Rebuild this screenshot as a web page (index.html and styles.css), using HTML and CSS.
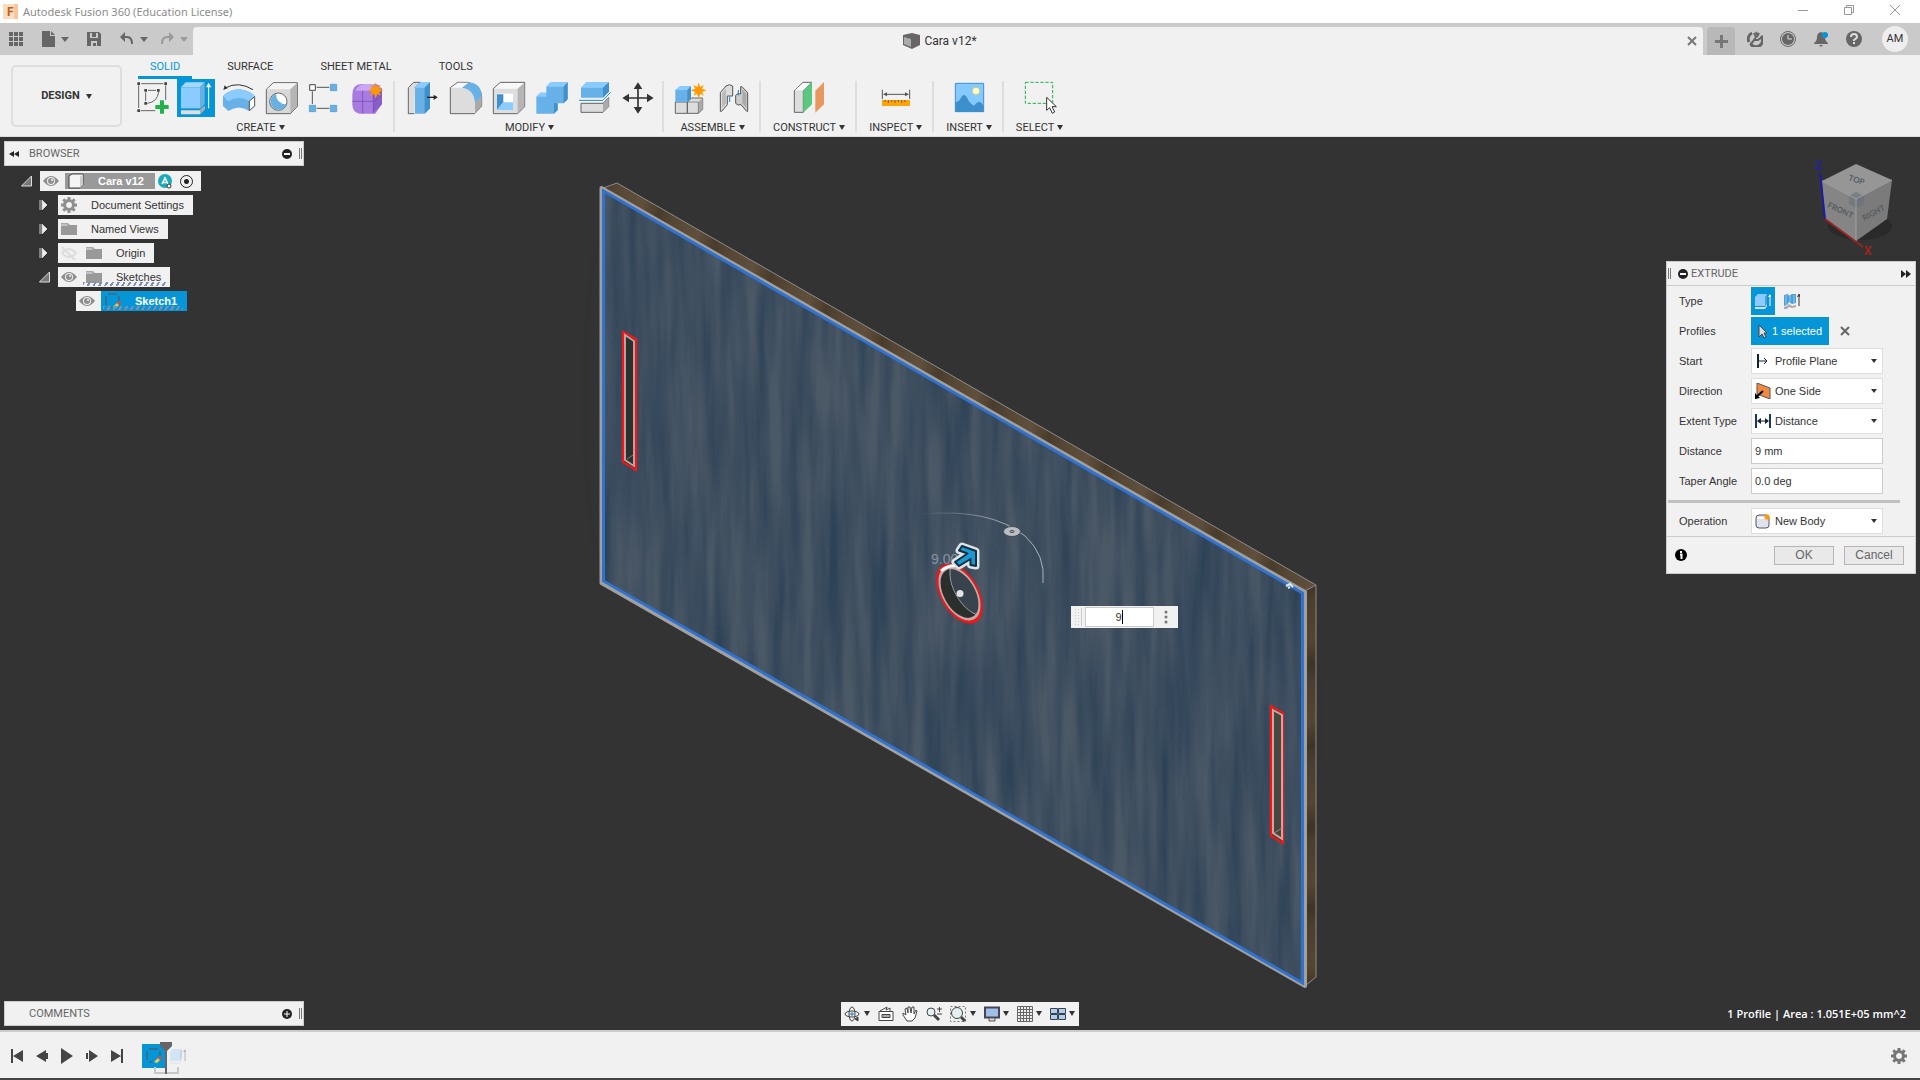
FILE: index.html
```html
<!DOCTYPE html>
<html lang="en">
<head>
    <meta charset="UTF-8">
    <meta name="viewport" content="width=device-width, initial-scale=1.0">
    <title>Autodesk Fusion 360 (Education License)</title>
    <link rel="stylesheet" href="styles.css">
</head>
<body>
    <!-- shared icons -->
    <svg class="defs" aria-hidden="true">
        <symbol id="eye" viewBox="0 0 16 16"><path d="M0 8Q8-2 16 8Q8 18 0 8Z" fill="#8f8f8f"/><circle cx="8" cy="8" r="4" fill="#f1f1f1"/><circle cx="8" cy="8" r="3" fill="#8f8f8f"/><circle cx="9" cy="7" r="1" fill="#f1f1f1"/></symbol>
        <symbol id="folder" viewBox="0 0 16 16"><path d="M0 2h7l2 2h7v2H0Z" fill="#a8a8a8"/><path d="M0 5h7l2-1h7v10H0Z" fill="#999"/><path d="M0 4h6" stroke="#ddd"/></symbol>
        <symbol id="gear" viewBox="0 0 16 16"><circle cx="8" cy="8" r="4.500" fill="none" stroke="currentColor" stroke-width="3"/><path d="M8 0v3M8 13v3M0 8h3M13 8h3M2.300 2.300l2.200 2.200M11.500 11.500l2.200 2.200M13.700 2.300l-2.200 2.200M4.500 11.500l-2.200 2.200" stroke="currentColor" stroke-width="3"/></symbol>
        <symbol id="star" viewBox="-24 -24 48 48"><path d="M0-24L4-10L15-16L10-5L24 0L10 5L16 16L5 10L0 24L-5 10L-16 16L-10 5L-24 0L-10-5L-16-16L-4-10Z" fill="#f90"/></symbol>
        <symbol id="sketch" viewBox="0 0 16 16"><path d="M3 1h9M1 3v9M3 14h4M14 3v5" stroke="#555" fill="none"/><path d="M8 14l4-4 2 2-3 3z" fill="#f7c948"/><path d="M12 10l2-2 2 2-2 2z" fill="#e8452c"/></symbol>
        <symbol id="extrude" viewBox="0 0 16 16"><path d="M0 4l3-3h9v9l-2 3H0Z" fill="#8accff"/><path d="M10 4l2-3v9l-2 3Z" fill="#4f9fd6"/><path d="M0 14h10l2-3v2l-2 3H0Z" fill="#ddd"/><path d="M15 2v11" stroke="currentColor"/><path d="M13 4l2-3 1 3z" fill="currentColor"/></symbol>
    </svg>

    <header class="titlebar">
        <svg class="app-icon" width="15" height="15" viewBox="0 0 15 15"><rect width="15" height="15" fill="#fbdcbf"/><rect x="11" width="4" height="15" fill="#f6c79c"/><text x="4" y="12" class="app-letter">F</text></svg>
        <span class="app-title">Autodesk Fusion 360 (Education License)</span>
        <div class="window-buttons">
            <button aria-label="Minimize"><svg width="12" height="12"><path d="M1 6.500h10" stroke="#999"/></svg></button>
            <button aria-label="Restore"><svg width="12" height="12" fill="none" stroke="#999"><path d="M1.500 3.500h7v7h-7zM3.500 3.500v-2h7v7h-2"/></svg></button>
            <button aria-label="Close"><svg width="12" height="12" stroke="#999"><path d="M1 1l10 10M11 1L1 11"/></svg></button>
        </div>
    </header>

    <div class="tabbar">
        <div class="quick">
            <button class="q-grid" aria-label="Data panel"><svg width="14" height="14" fill="#666"><path d="M0 0h4v4H0zM5 0h4v4H5zM10 0h4v4h-4zM0 5h4v4H0zM5 5h4v4H5zM10 5h4v4h-4zM0 10h4v4H0zM5 10h4v4H5zM10 10h4v4h-4z"/></svg></button>
            <button class="q-file" aria-label="File"><svg width="13" height="16" fill="#666"><path d="M0 0h8v5h5v11H0zM9 0l4 4H9z"/></svg><i class="caret"></i></button>
            <button class="q-save" aria-label="Save"><svg width="14" height="14"><path d="M0 0h12l2 2v12H0z" fill="#666"/><path d="M3 1h8v5H3zM4 9h6v5H4z" fill="#cacaca"/><path d="M5 0h4v5H5zM6 11h3v3H6z" fill="#666"/></svg></button>
            <button class="q-undo" aria-label="Undo"><svg width="14" height="14"><path d="M3 5h4q5 0 5 7" stroke="#666" stroke-width="2" fill="none"/><path d="M0 5l5-5v3L4 5l1 2v3z" fill="#666"/></svg><i class="caret"></i></button>
            <button class="q-redo" aria-label="Redo"><svg width="14" height="14"><path d="M11 5H7Q2 5 2 12" stroke="#999" stroke-width="2" fill="none"/><path d="M14 5L9 0v3l1 2-1 2v3z" fill="#999"/></svg><i class="caret dim"></i></button>
        </div>
        <div class="doc-tab">
            <span class="doc-name"><svg width="17" height="16" viewBox="0 0 17 16"><path d="M0 2l9-2 8 2v10l-8 4-9-4z" fill="#666"/><path d="M1 4l7 2v8l-7-3z" fill="#aaa"/></svg>Cara v12*</span>
            <button aria-label="Close tab"><svg width="10" height="10"><path d="M1 1l8 8M9 1L1 9" stroke="#777" stroke-width="2"/></svg></button>
        </div>
        <button class="new-tab" aria-label="New design"><svg width="13" height="13"><path d="M0 6.500h13M6.500 0v13" stroke="#777" stroke-width="3"/></svg></button>
        <div class="account">
            <button aria-label="Extensions"><svg width="16" height="16" viewBox="0 0 16 16"><path d="M5 2A6.500 6.500 0 0 0 2 11M4 13.500A6.500 6.500 0 0 0 14 5" fill="none" stroke="#666" stroke-width="3"/><path d="M3 14l5-6M7 2l2 4-2 3 4 0 4-3M9 1l2 4M12 2l-2 4" stroke="#666" stroke-width="2" fill="none"/></svg></button>
            <button aria-label="Job status"><svg width="16" height="16" viewBox="0 0 16 16"><circle cx="8" cy="8" r="7.500" fill="none" stroke="#666"/><circle cx="8" cy="8" r="6" fill="#666"/><path d="M8 4v4h4" stroke="#ddd" fill="none"/></svg></button>
            <button aria-label="Notifications"><svg width="16" height="16" viewBox="0 0 16 16"><path d="M1 12q3-2 3-6t4-5q4 1 4 5t3 6v1H1zM6 14h4l-2 2z" fill="#666"/><circle cx="12" cy="4" r="3" fill="#0696d7"/></svg></button>
            <button aria-label="Help"><svg width="16" height="16" viewBox="0 0 16 16"><circle cx="8" cy="8" r="8" fill="#666"/><path d="M5 6q0-3 3-3t3 3q0 1-3 3v1M8 11v2" stroke="#ddd" stroke-width="2" fill="none"/></svg></button>
            <button class="avatar">AM</button>
        </div>
    </div>

    <div class="toolbar">
        <button class="workspace">DESIGN <i class="caret small"></i></button>
        <div class="ribbon">
            <nav class="ribbon-tabs">
                <a href="#" class="active">SOLID</a>
                <a href="#">SURFACE</a>
                <a href="#">SHEET METAL</a>
                <a href="#">TOOLS</a>
            </nav>
            <div class="groups">
                <div class="group">
                    <div class="tools">
                        <button aria-label="Create sketch"><svg viewBox="402 237 114 114"><path d="M424 251h66M416 256v68M497 256v44M422 332h44M444 271h24M437 277v26M476 276q-4 30-34 34" fill="none" stroke="#666" stroke-width="3"/><path d="M412 247h8v8h-8zM493 247h8v8h-8zM412 328h8v8h-8zM433 267h8v8h-8zM471 267h8v8h-8zM433 306h8v8h-8z" fill="#444"/><path d="M480 301h12v14h14v12h-14v14h-12v-14h-14v-12h14z" fill="#23b14d"/></svg></button>
                        <button class="on" aria-label="Extrude"><svg viewBox="531 237 114 114"><path d="M543 262h57v63h-57z" fill="#8accff"/><path d="M543 262l14-15h57l-14 15z" fill="#a5d8ff"/><path d="M600 262l14-15v65l-14 15z" fill="#68b0e0"/><path d="M543 331h57l14-14v11l-14 15h-57z" fill="#ddd"/><path d="M600 331l14-14v11l-14 15z" fill="#aaa"/><path d="M626 256v69" stroke="#fff" stroke-width="3"/><path d="M618 262l8-14 8 14z" fill="#fff"/></svg></button>
                        <button aria-label="Revolve"><svg viewBox="660 237 114 114"><path d="M676 264Q715 242 759 269" fill="none" stroke="#333" stroke-width="3"/><path d="M670 270l4-14 9 9z" fill="#333"/><path d="M669 289C690 262 742 262 765 289V318L748 333Q716 312 685 333L669 318Z" fill="#68b0e8"/><path d="M669 289C690 262 742 262 765 289L748 303Q716 284 685 304Z" fill="#8accff"/><path d="M748 303l16-13v28l-16 14z" fill="#fff" stroke="#555" stroke-width="3"/></svg></button>
                        <button aria-label="Hole"><svg viewBox="789 237 114 114"><path d="M799 268l21-20h72v72l-21 21h-72z" fill="#d8d8d8" stroke="#666" stroke-width="3"/><path d="M801 268l20-18h70l-20 18z" fill="#f4f4f4"/><path d="M871 268l20-18v70l-20 20z" fill="#b5b5b5"/><circle cx="835" cy="305" r="26" fill="#fff" stroke="#666" stroke-width="3"/><path d="M828 281q0 30 32 32a25 25 0 1 1-32-32z" fill="#68b0e0"/></svg></button>
                        <button aria-label="Rectangular pattern"><svg viewBox="918 237 114 114"><path d="M950 262h38M937 274v38M950 325h38" stroke="#555" stroke-width="3"/><path d="M929 254h17v17h-17z" fill="#fff" stroke="#444" stroke-width="3"/><path d="M991 253h19v19h-19zM928 316h19v19h-19zM991 316h19v19h-19z" fill="#68b0e0" stroke="#4b96cc" stroke-width="2"/></svg></button>
                        <button aria-label="Create form"><svg viewBox="1047 237 114 114"><path d="M1057 284q0-32 28-32h44q17 5 17 32v28l-20 29h-48q-21-4-21-28z" fill="#a87be0"/><path d="M1066 272q10-20 28-20h30l-14 20z" fill="#c8a5f5"/><path d="M1120 280l26-16v48l-26 28z" fill="#8a5cc6"/><path d="M1057 304h64l24-18M1088 272v68M1120 276v64" fill="none" stroke="#7048ad" stroke-width="2"/><use href="#star" x="1103" y="247" width="48" height="48"/></svg></button>
                    </div>
                    <button class="group-label">CREATE <i class="caret small"></i></button>
                </div>
                <div class="group">
                    <div class="tools">
                        <button aria-label="Press pull"><svg viewBox="6 87 114 114"><path d="M40 191H22V113L38 97h20L42 113" fill="#ddd" stroke="#666" stroke-width="3"/><path d="M42 113l16-16h29v78l-16 16H42z" fill="#68b0e8"/><path d="M42 113l16-16h29l-16 16z" fill="#8accff"/><path d="M71 113l16-16v78l-16 16z" fill="#4090ca"/><path d="M78 142h22" stroke="#222" stroke-width="4"/><path d="M98 134l12 8-12 8z" fill="#222"/></svg></button>
                        <button aria-label="Fillet"><svg viewBox="135 87 114 114"><path d="M148 113l22-16h30q42 10 42 45v26l-21 23h-73z" fill="#ddd" stroke="#666" stroke-width="3"/><path d="M150 113l22-15h30l-18 15z" fill="#f8f8f8"/><path d="M222 155l20-17v30l-20 22z" fill="#aaa"/><path d="M183 113l22-16q37 5 37 42l-20 18q-4-40-39-44z" fill="#68b0e8"/></svg></button>
                        <button aria-label="Shell"><svg viewBox="264 87 114 114"><path d="M277 116l21-19h73v73l-21 21h-73z" fill="#ddd" stroke="#666" stroke-width="3"/><path d="M279 116l20-17h70l-19 17z" fill="#f8f8f8"/><path d="M350 116l20-17v70l-20 21z" fill="#b5b5b5"/><path d="M288 131h48v49h-48z" fill="#fff"/><path d="M288 133l19 0v24l-19 23z" fill="#4090ca"/><path d="M288 180l19-23h29v23z" fill="#8accff"/></svg></button>
                        <button aria-label="Combine"><svg viewBox="393 87 114 114"><path d="M406 140l12-12h18v-18l13-13h51v51l-12 12h-18v20l-11 11h-53z" fill="#68b0e8"/><path d="M406 140l12-12h18v12zM436 110l13-13h51l-12 13z" fill="#8accff"/><path d="M488 110l12-13v51l-12 12zM459 160h11v20l-11 11z" fill="#4090ca"/></svg></button>
                        <button aria-label="Split body"><svg viewBox="522 87 114 114"><path d="M540 160h66l17-18v28l-17 17h-66z" fill="#ddd" stroke="#666" stroke-width="3"/><path d="M606 160l17-18v28l-17 17z" fill="#aaa"/><path d="M540 113l16-16h68v28l-18 18h-66z" fill="#68b0e8"/><path d="M540 113l16-16h68l-18 16z" fill="#8accff"/><path d="M606 113l18-16v28l-18 18z" fill="#4090ca"/><path d="M534 151h72l23-24" fill="none" stroke="#fff" stroke-width="7"/><path d="M534 151h72l23-24" fill="none" stroke="#0a85d8" stroke-width="3"/></svg></button>
                        <button aria-label="Move"><svg viewBox="651 87 114 114"><path d="M711 108v72M675 144h72" stroke="#333" stroke-width="5"/><path d="M711 97l13 20h-26zM711 191l13-20h-26zM664 144l20-13v26zM758 144l-20-13v26z" fill="#333"/></svg></button>
                    </div>
                    <button class="group-label">MODIFY <i class="caret small"></i></button>
                </div>
                <div class="group">
                    <div class="tools">
                        <button aria-label="New component"><svg viewBox="816 87 114 114"><path d="M826 156h36v34h-36zM862 156l13-12h33v34l-13 12h-33z" fill="#ddd" stroke="#666" stroke-width="3"/><path d="M895 156l13-12v34l-13 12z" fill="#aaa"/><path d="M862 156h33v34" fill="none" stroke="#666" stroke-width="2"/><path d="M826 120l14-11h33v36l-11 11h-36z" fill="#68b0e8"/><path d="M826 120l14-11h33l-11 11z" fill="#8accff"/><path d="M862 120l11-11v36l-11 11z" fill="#4090ca"/><use href="#star" x="872" y="97" width="48" height="48"/></svg></button>
                        <button aria-label="Joint"><svg viewBox="945 87 114 114"><path d="M961 128l17-20q10-8 20 0v30h-16v26l-17 20h-4z" fill="#ddd" stroke="#555" stroke-width="3"/><path d="M966 130l12-14v44l-12 14z" fill="#bbb"/><path d="M1043 128l-17-18h-4v22q-10-4-15 4v24q6 8 16 4l17 20h3z" fill="#ccc" stroke="#555" stroke-width="3"/><path d="M1027 118l12 14v42l-12-14z" fill="#aaa"/><path d="M989 140v16M1015 120v16" stroke="#0a85d8" stroke-width="3"/></svg></button>
                    </div>
                    <button class="group-label">ASSEMBLE <i class="caret small"></i></button>
                </div>
                <div class="group wide">
                    <div class="tools">
                        <button aria-label="Offset plane"><svg viewBox="153 147 114 114"><path d="M166 182l26-25h26l-25 25v65h-27z" fill="#ddd" stroke="#666" stroke-width="3"/><path d="M168 181l25-22h22l-22 22z" fill="#fff"/><path d="M193 182l26-26v67l-26 25z" fill="#5ac97f"/><path d="M229 182l26-26v67l-26 25z" fill="#e8975e"/></svg></button>
                    </div>
                    <button class="group-label">CONSTRUCT <i class="caret small"></i></button>
                </div>
                <div class="group wide">
                    <div class="tools">
                        <button aria-label="Measure"><svg viewBox="420 147 114 114"><path d="M436 179v28M518 179v28M442 193h70" stroke="#555" stroke-width="3"/><path d="M438 193l12-6v12zM516 193l-12-6v12z" fill="#555"/><path d="M435 210h84v18h-84z" fill="#fba50a"/><path d="M444 210v6M454 210v9M464 210v6M474 210v9M484 210v6M494 210v9M504 210v6" stroke="#8a5600" stroke-width="3"/></svg></button>
                    </div>
                    <button class="group-label">INSPECT <i class="caret small"></i></button>
                </div>
                <div class="group wide">
                    <div class="tools">
                        <button aria-label="Insert image"><svg viewBox="639 147 114 114"><path d="M655 160h85v85h-85z" fill="#84caff" stroke="#3e90cc" stroke-width="3"/><path d="M655 217q12-2 18-16q8-12 16 0q8 20 22 26q10-12 16-12t13 14v17h-85z" fill="#3e90cc"/><circle cx="717" cy="183" r="11" fill="#ffffc8" stroke="#c7bd63" stroke-width="2"/></svg></button>
                    </div>
                    <button class="group-label">INSERT <i class="caret small"></i></button>
                </div>
                <div class="group wide last">
                    <div class="tools">
                        <button aria-label="Select"><svg viewBox="855 147 114 114"><path d="M868 157h82v63h-82z" fill="none" stroke="#23b14d" stroke-width="3" stroke-dasharray="10 5"/><path d="M932 202v39l9-8 8 17 7-4-8-16h13z" fill="#fff" stroke="#333" stroke-width="3"/></svg></button>
                    </div>
                    <button class="group-label">SELECT <i class="caret small"></i></button>
                </div>
            </div>
        </div>
    </div>

    <main class="canvas">
        <svg class="model" viewBox="0 137 1920 893" preserveAspectRatio="xMidYMid slice">
            <defs>
                <filter id="grain" x="0" y="0" width="1" height="1" color-interpolation-filters="sRGB">
                    <feTurbulence type="fractalNoise" baseFrequency="0.07 0.006" numOctaves="3" seed="7"/>
                    <feColorMatrix values="0 0 0 0 0.18  0 0 0 0 0.26  0 0 0 0 0.34  1.800 0 0 0 -0.500"/>
                    <feComposite in2="SourceAlpha" operator="in"/>
                </filter>
                <filter id="soft" x="-1" y="-1" width="3" height="3"><feGaussianBlur stdDeviation="12"/></filter>
                <linearGradient id="edge" gradientUnits="userSpaceOnUse" x1="620" y1="190" x2="680" y2="205" spreadMethod="repeat">
                    <stop offset="0" stop-color="#574836"/><stop offset=".4" stop-color="#5f4f3c"/><stop offset=".7" stop-color="#4a3c2c"/><stop offset="1" stop-color="#574836"/>
                </linearGradient>
                <linearGradient id="side" gradientUnits="userSpaceOnUse" x1="1306" y1="600" x2="1316" y2="680" spreadMethod="repeat">
                    <stop offset="0" stop-color="#4a3e2d"/><stop offset=".5" stop-color="#554632"/><stop offset=".8" stop-color="#3f3424"/><stop offset="1" stop-color="#4a3e2d"/>
                </linearGradient>
                <linearGradient id="fade" gradientUnits="userSpaceOnUse" x1="930" y1="0" x2="1010" y2="0">
                    <stop offset="0" stop-color="#aab" stop-opacity=".1"/><stop offset="1" stop-color="#aab0b6"/>
                </linearGradient>
                <clipPath id="hole"><circle r="24" transform="matrix(.871 .501 0 1 959.500 593.500)"/></clipPath>
            </defs>
            <path d="M603 188L617 183L1316 585L1305 591Z" fill="url(#edge)"/>
            <path d="M1305 591L1316 585V977L1305 986Z" fill="url(#side)"/>
            <path d="M603 188L617 183L1316 585V977L1305 986M1316 585L1305 591" fill="none" stroke="#8c8c8c"/>
            <path d="M602 189L1304 592V986L602 583Z" fill="#4b5866"/>
            <path d="M602 189L1304 592V986L602 583Z" fill="#4b5866" filter="url(#grain)"/>
            <g fill="#2a4058" opacity=".4" filter="url(#soft)"><ellipse cx="978" cy="690" rx="12" ry="50"/><ellipse cx="1190" cy="650" rx="14" ry="110"/><ellipse cx="622" cy="400" rx="14" ry="150"/><ellipse cx="1284" cy="720" rx="12" ry="110"/></g>
            <path d="M601.500 188L1305 592V986L601.500 583Z" fill="none" stroke="#a0a0a0" stroke-width="4" stroke-linejoin="round"/>
            <path d="M603.500 191L1302.500 593V983L603.500 581Z" fill="none" stroke="#3072cd" stroke-width="3"/>
            <path d="M1286 586l4-2 3 3M1288 588l2-1" fill="none" stroke="#dfeaf4" stroke-width="2"/>

            <!-- slots -->
            <g stroke-linejoin="miter">
                <path d="M623 332L636 339V470L623 462Z" fill="#2b312f" stroke="#f11" stroke-width="2"/>
                <path d="M625 335L634 341V466L625 460Z" fill="#2b312f" stroke="#b9a3a0" stroke-width="2"/>
                <path d="M627 459l6-4" stroke="#777"/>
                <path d="M1271 706L1283 713V843L1271 836Z" fill="#46483f" stroke="#f11" stroke-width="2"/>
                <path d="M1273 710L1282 715V839L1273 833Z" fill="#46483f" stroke="#d3a3a0" stroke-width="2"/>
                <path d="M1274 833l8-5" stroke="#888"/>
            </g>

            <!-- drag handle arc -->
            <path d="M923 514Q990 508 1025 536Q1046 555 1043 583" fill="none" stroke="url(#fade)"/>
            <ellipse cx="1012" cy="531.500" rx="8.500" ry="5" fill="#b9bec3" stroke="#444c55"/>
            <ellipse cx="1012" cy="531.500" rx="2" ry="1" fill="none" stroke="#444"/>
            <text x="931" y="564" class="dim-text">9.00</text>

            <!-- hole -->
            <circle r="25.500" transform="matrix(.871 .501 0 1 959.500 593.500)" fill="#2b2f2c" stroke="#f11" stroke-width="2.500"/>
            <g clip-path="url(#hole)">
                <circle r="26.500" transform="matrix(.871 .501 0 1 973 586.500)" fill="#38434d" stroke="#a6adb3"/>
            </g>
            <circle r="23" transform="matrix(.871 .501 0 1 959.500 593.500)" fill="none" stroke="#c9a5a5" stroke-width="2.500"/>
            <path d="M941 571q6-6 16-5" stroke="#fff" stroke-width="3" fill="none"/>
            <circle cx="960" cy="593.500" r="3.500" fill="#e4e4e4"/>
            <g stroke-linejoin="round">
                <path d="M955 562L967.500 553.500L959 550.500L962 546L976 551V566L970.500 565V559L959 566Z" fill="#dfe3e6" stroke="#dfe3e6" stroke-width="7"/>
                <path d="M955 562L967.500 553.500L959 550.500L962 546L976 551V566L970.500 565V559L959 566Z" fill="#1a98d5" stroke="#113040" stroke-width="2"/>
            </g>
        </svg>

        <div class="overlay-top">
            <aside class="browser">
                <div class="panel-head">
                    <button class="fold" aria-label="Collapse"><svg width="10" height="6"><path d="M0 3l5-3v6zM5 3l5-3v6z" fill="#222"/></svg></button>
                    <h2>BROWSER</h2>
                    <button class="round" aria-label="Hide"><svg width="10" height="10"><circle cx="5" cy="5" r="5" fill="#222"/><path d="M2 5h6" stroke="#fff" stroke-width="2"/></svg></button>
                    <span class="grip"></span>
                </div>
                <ul class="tree">
                    <li class="lv0">
                        <svg class="twisty" viewBox="0 0 12 12"><path d="M10.500 1v10h-10z" fill="#777" stroke="#ddd"/></svg>
                        <div class="node"><svg><use href="#eye"/></svg><span class="root"><svg viewBox="0 0 16 16"><path d="M1 3l3-2h11v11l-3 3H1z" fill="#f4f4f4" stroke="#444"/><path d="M12 4l3-3v11l-3 3z" fill="#ccc"/></svg>Cara v12</span>
                            <svg class="badge" viewBox="0 0 16 16"><circle cx="8" cy="8" r="7" fill="#1cabbd"/><path d="M5 11l3-6 3 6M6.500 9.500h3" stroke="#fff" stroke-width="1.500" fill="none"/><circle cx="12" cy="13" r="2" fill="#fff" stroke="#333"/></svg>
                            <input type="radio" name="active-component" aria-label="Activate component" checked></div>
                    </li>
                    <li class="lv1"><svg class="twisty" viewBox="0 0 12 12"><path d="M1 1v10M3 1v10l5-5z" fill="#eee" stroke="#ccc"/></svg><div class="node"><svg class="gray"><use href="#gear"/></svg><span class="label">Document Settings</span></div></li>
                    <li class="lv1"><svg class="twisty" viewBox="0 0 12 12"><path d="M1 1v10M3 1v10l5-5z" fill="#eee" stroke="#ccc"/></svg><div class="node"><svg><use href="#folder"/></svg><span class="label">Named Views</span></div></li>
                    <li class="lv1"><svg class="twisty" viewBox="0 0 12 12"><path d="M1 1v10M3 1v10l5-5z" fill="#eee" stroke="#ccc"/></svg><div class="node"><svg viewBox="0 0 16 16"><path d="M1 8Q8 0 15 8Q8 16 1 8M1 2l13 13" fill="none" stroke="#ddd" stroke-width="2"/></svg><svg class="second"><use href="#folder"/></svg><span class="label">Origin</span></div></li>
                    <li class="lv1"><svg class="twisty" viewBox="0 0 12 12"><path d="M10.500 1v10h-10z" fill="#777" stroke="#ddd"/></svg><div class="node hatched"><svg><use href="#eye"/></svg><svg class="second"><use href="#folder"/></svg><span class="label">Sketches</span></div></li>
                    <li class="lv2"><div class="node"><svg><use href="#eye"/></svg><span class="selected hatched"><svg><use href="#sketch"/></svg>Sketch1</span></div></li>
                </ul>
            </aside>

            <div class="right-side">
                <svg class="cube" width="90" height="104" viewBox="1810 155 90 104">
                    <ellipse cx="1860" cy="226" rx="32" ry="14" fill="#222" opacity=".5"/>
                    <path d="M1856 164L1892 180L1856 199L1822 181Z" fill="#969696"/>
                    <path d="M1822 181L1856 199V241L1825 219Z" fill="#858585"/>
                    <path d="M1856 199L1892 180L1887 219L1856 241Z" fill="#7b7b7b"/>
                    <path d="M1856 192l8 4v8l-8 4-7-4v-8z" fill="#68717c" opacity=".6"/>
                    <path d="M1822 181L1856 199L1892 180M1856 199V241" fill="none" stroke="#a0a0a0"/>
                    <text x="1848" y="180" transform="rotate(18 1848 180)" class="face">TOP</text>
                    <text x="1827" y="207" transform="rotate(25 1827 207)" class="face">FRONT</text>
                    <text x="1864" y="221" transform="rotate(-28 1864 221)" class="face">RIGHT</text>
                    <path d="M1820 173L1825 219" stroke="#1c1caa" stroke-width="2"/>
                    <path d="M1825 219L1863 247" stroke="#922" stroke-width="2"/>
                    <text x="1815" y="170" class="axis z">Z</text>
                    <text x="1864" y="255" class="axis x">X</text>
                </svg>

                <form class="dialog" onsubmit="return false">
                    <div class="dialog-head">
                        <span class="grip"></span>
                        <button type="button" aria-label="Collapse"><svg width="10" height="10"><circle cx="5" cy="5" r="5" fill="#222"/><path d="M2 5h6" stroke="#fff" stroke-width="2"/></svg></button>
                        <h2>EXTRUDE</h2>
                        <button type="button" class="fold" aria-label="Dock"><svg width="10" height="8"><path d="M0 0l5 4-5 4zM5 0l5 4-5 4z" fill="#222"/></svg></button>
                    </div>
                    <div class="fields">
                        <div class="row"><span>Type</span><div class="types"><button type="button" class="on" aria-label="Extrude"><svg class="white"><use href="#extrude"/></svg></button><button type="button" aria-label="Thin extrude"><svg viewBox="0 0 16 16"><path d="M0 2l4-1 1 2 3-2h4v9l-4 1-3-2-2 3-3 1z" fill="#4f9fd6"/><path d="M2 2v10M6 3v6M10 2v8" stroke="#8accff"/><path d="M0 14l3-1 2-2 3 2 4-1v2l-4 1-3-1-2 2H0z" fill="#aaa"/><path d="M15 2v11M13.500 4l1.500-3 1 3" stroke="#333" fill="none"/></svg></button></div></div>
                        <div class="row"><span>Profiles</span><button type="button" class="picked"><svg width="10" height="15"><path d="M1 1v12l3-3 2 4 2-1-2-4h3z" fill="#ddd" stroke="#444"/></svg>1 selected</button><button type="button" class="clear" aria-label="Clear selection"><svg width="10" height="10"><path d="M1 1l8 8M9 1L1 9" stroke="#666" stroke-width="2"/></svg></button></div>
                        <div class="row"><label for="start">Start</label><div class="drop"><svg viewBox="0 0 16 16"><path d="M3 1v14" stroke="#123" stroke-width="2"/><path d="M4 8h8M9 5l3 3-3 3" stroke="#123" fill="none"/></svg><select id="start"><option>Profile Plane</option></select></div></div>
                        <div class="row"><label for="direction">Direction</label><div class="drop"><svg viewBox="0 0 16 16"><path d="M2 0l13 5v11L2 11z" fill="#ef8a43" stroke="#555"/><path d="M0 15l8-7" stroke="#000" stroke-width="2"/><path d="M0 16v-6l5 5z" fill="#000"/></svg><select id="direction"><option>One Side</option></select></div></div>
                        <div class="row"><label for="extent">Extent Type</label><div class="drop"><svg viewBox="0 0 16 16"><path d="M1 1v14M15 1v14" stroke="#1a3767" stroke-width="2"/><path d="M3 8h10" stroke="#123"/><path d="M2 8l4-3v6zM14 8l-4-3v6z" fill="#123"/></svg><select id="extent"><option>Distance</option></select></div></div>
                        <div class="row"><label for="distance">Distance</label><input id="distance" type="text" value="9 mm"></div>
                        <div class="row"><label for="taper">Taper Angle</label><input id="taper" type="text" value="0.0 deg"></div>
                        <hr>
                        <div class="row"><label for="operation">Operation</label><div class="drop"><svg viewBox="0 0 16 16"><rect x="1" y="2" width="13" height="13" rx="3" fill="#dfe4ec" stroke="#556"/><path d="M2 4h11v2H2z" fill="#fff"/><use href="#star" x="8" y="0" width="8" height="8"/></svg><select id="operation"><option>New Body</option></select></div></div>
                    </div>
                    <div class="dialog-foot">
                        <svg width="12" height="12"><circle cx="6" cy="6" r="6"/><path d="M6 2v2M5 5.500h1.500V10" stroke="#fff" stroke-width="2" fill="none"/></svg>
                        <button type="submit">OK</button>
                        <button type="button">Cancel</button>
                    </div>
                </form>
            </div>
        </div>

        <div class="value-box">
            <span class="dots"></span>
            <div class="value"><input type="text" value="9" aria-label="Distance value"><i class="cursor"></i></div>
            <button aria-label="More"><svg width="4" height="14" fill="#777"><circle cx="2" cy="2" r="1.500"/><circle cx="2" cy="7" r="1.500"/><circle cx="2" cy="12" r="1.500"/></svg></button>
        </div>

        <div class="overlay-bottom">
            <div class="panel-head comments">
                <h2>COMMENTS</h2>
                <button class="round" aria-label="Add comment"><svg width="10" height="10"><circle cx="5" cy="5" r="5" fill="#222"/><path d="M2 5h6M5 2v6" stroke="#fff"/></svg></button>
                <span class="grip"></span>
            </div>
            <div class="navbar">
                <button aria-label="Orbit"><svg viewBox="0 0 16 16" fill="none" stroke="#444"><ellipse cx="8" cy="8" rx="7" ry="3"/><ellipse cx="8" cy="8" rx="3" ry="7"/><path d="M6 8h4M8 6v4" stroke="#1c7ed6"/><path d="M11 13l3-2v4z" fill="#444"/></svg><i class="caret small"></i></button>
                <button aria-label="Look at"><svg viewBox="0 0 16 16" fill="#fff" stroke="#444"><path d="M2 5l7-4-1 3 4-2v3"/><path d="M1 5.500h14v9H1z"/><path d="M4 8.500h8v3H4z" fill="#aaa"/></svg></button>
                <button aria-label="Pan"><svg viewBox="0 0 16 16" fill="#fff" stroke="#444"><path d="M5 15L1 9V7l3 2-1-6 2-1 1 5V1h2l1 6 1-6h2v7l2-4 1 1-2 7-3 3z"/></svg></button>
                <button aria-label="Zoom"><svg viewBox="0 0 16 16" fill="none" stroke="#444"><circle cx="5" cy="6" r="4" fill="#e3f1f3"/><path d="M8 9l5 5" stroke-width="3"/><path d="M11 3h5M13.500 1v5M11 8h5"/></svg></button>
                <button aria-label="Fit"><svg viewBox="0 0 16 16" fill="none" stroke="#444"><rect x=".500" y=".500" width="15" height="15" stroke="#777" stroke-dasharray="2 2"/><circle cx="7" cy="7" r="5.500" fill="#e3f1f3"/><path d="M11 11l4 4" stroke-width="3"/></svg><i class="caret small"></i></button>
                <button class="tight" aria-label="Display settings"><svg viewBox="0 0 16 16"><path d="M1 1.500h14v10H1z" fill="#9fc0e8" stroke="#445" stroke-width="2"/><path d="M5 12h6v3H5z" fill="#ddd" stroke="#555"/></svg><i class="caret small"></i></button>
                <button class="tight" aria-label="Grid"><svg viewBox="0 0 16 16"><path d="M.500.500h15v15H.500zM3.500 0v16M6.500 0v16M9.500 0v16M12.500 0v16M0 3.500h16M0 6.500h16M0 9.500h16M0 12.500h16" fill="#eee" stroke="#666"/></svg><i class="caret small"></i></button>
                <button class="tight" aria-label="Viewports"><svg viewBox="0 0 16 16" fill="#b5cdea" stroke="#345"><path d="M.500 2.500h7v5h-7zM8.500 2.500h7v5h-7zM.500 8.500h7v5h-7zM8.500 8.500h7v5h-7z"/></svg><i class="caret small"></i></button>
            </div>
            <p class="status">1 Profile | Area : 1.051E+05 mm^2</p>
        </div>
    </main>

    <footer class="timeline">
        <div class="player">
            <button aria-label="Go to start"><svg width="12" height="14"><path d="M0 0h2v14H0zM12 1v12L2 7z"/></svg></button>
            <button aria-label="Step back"><svg width="12" height="14"><path d="M10 1v12L0 7zM10 4h2v6h-2z"/></svg></button>
            <button aria-label="Play"><svg width="12" height="16"><path d="M0 0l12 8L0 16z"/></svg></button>
            <button aria-label="Step forward"><svg width="12" height="14"><path d="M3 1v12l9-6zM0 4h2v6H0z"/></svg></button>
            <button aria-label="Go to end"><svg width="12" height="14"><path d="M10 0h2v14h-2zM0 1v12l10-6z"/></svg></button>
        </div>
        <div class="features">
            <button class="on" aria-label="Sketch1"><svg><use href="#sketch"/></svg></button>
            <button class="off" aria-label="Extrude1"><svg><use href="#extrude"/></svg></button>
            <svg class="marker" width="26" height="33"><path d="M1 25v6h23v-6" fill="none" stroke="#c8c8c8" stroke-width="2"/><path d="M6 0h12v4l-5 5v23h-2V9L6 4z" fill="#666"/></svg>
        </div>
        <button class="settings" aria-label="Settings"><svg width="16" height="16"><use href="#gear"/></svg></button>
    </footer>
</body>
</html>
```
FILE: styles.css
```css
* { box-sizing: border-box; }
body { margin: 0; height: 100vh; display: flex; flex-direction: column; overflow: hidden; background: #333; color: #333; font: 11px/16px Roboto, Arial, sans-serif; }
button { margin: 0; padding: 0; border: 0; background: none; color: inherit; font: inherit; display: flex; align-items: center; justify-content: center; cursor: pointer; }
h2 { margin: 0; font-size: 11px; font-weight: normal; color: #666; }
svg { display: block; flex: none; }
.defs { position: absolute; width: 0; height: 0; }
.caret { width: 0; height: 0; border: 4px solid transparent; border-top: 5px solid #666; border-bottom: 0; }
.caret.dim { border-top-color: #999; }
.caret.small { border-width: 5px 3px 0; border-top-color: #333; }

/* title bar */
.titlebar { flex: none; height: 23px; background: #fff; display: flex; align-items: center; padding: 0 14px 0 3px; }
.app-letter { font: bold 12px Roboto, sans-serif; fill: #b8621b; }
.app-title { flex: 1; margin-left: 5px; font: 11px/16px "Noto Sans", sans-serif; color: #8c8c8c; }
.window-buttons { display: flex; gap: 34px; margin: 0 5px 3px 0; }

/* tab bar */
.tabbar { flex: none; height: 32px; background: #cacaca; display: flex; align-items: flex-end; }
.quick { width: 193px; height: 32px; padding-left: 9px; display: flex; align-items: center; }
.quick button { gap: 6px; }
.q-file { margin-left: 19px; }
.q-save { margin-left: 18px; }
.q-undo { margin-left: 19px; }
.q-redo { margin-left: 12px; }
.doc-tab { flex: 1; height: 28px; padding-right: 6px; border-radius: 4px 4px 0 0; background: #f1f1f1; display: flex; align-items: center; }
.doc-name { flex: 1; display: flex; align-items: center; justify-content: center; gap: 4px; font-size: 12px; }
.new-tab { width: 28px; height: 28px; margin-left: 4px; border-radius: 4px 4px 0 0; background: #b8b8b8; }
.account { height: 32px; padding: 0 12px; display: flex; align-items: center; gap: 17px; }
.avatar { width: 26px; height: 26px; margin-left: 3px; border-radius: 50%; background: #eee; }

/* toolbar */
.toolbar { flex: none; height: 82px; background: #f1f1f1; border-bottom: 1px solid #ddd; display: flex; }
.workspace { width: 111px; height: 62px; margin: 10px 4px 0 11px; border: 2px solid #dedede; border-radius: 5px; font-weight: bold; gap: 6px; }
.ribbon-tabs { display: flex; gap: 23px; padding-left: 12px; }
.ribbon-tabs a { height: 24px; padding: 0 12px; border-bottom: 3px solid transparent; line-height: 23px; color: #333; text-decoration: none; }
.ribbon-tabs .active { color: #0696d7; border-color: #0696d7; }
.groups { display: flex; }
.group { position: relative; padding: 0 8px; }
.group.wide { padding: 0 12px; }
.group::after { content: ""; position: absolute; right: 0; top: 2px; width: 2px; height: 51px; background: #dedede; }
.group.last::after { display: none; }
.tools { display: flex; gap: 5px; justify-content: center; }
.tools button, .tools svg { width: 38px; height: 38px; }
.tools .on { background: #0696d7; }
.group-label { width: 100%; height: 19px; padding-top: 2px; gap: 3px; }

/* canvas */
.canvas { flex: 1; min-height: 0; position: relative; display: flex; flex-direction: column; justify-content: space-between; padding: 4px; }
.model { position: absolute; left: 0; top: 0; width: 100%; height: 100%; }
.dim-text { font: 14px "Liberation Sans", Arial, sans-serif; fill: #8393a6; }
.overlay-top { position: relative; display: flex; justify-content: space-between; }
.panel-head { width: 300px; height: 25px; padding: 0 1px 0 4px; background: #f1f1f1; border: 1px solid #ccc; display: flex; align-items: center; }
.panel-head .fold { width: 20px; justify-content: flex-start; }
.panel-head h2 { flex: 1; }
.comments { padding-left: 24px; }
.round { margin-right: 7px; }
.grip { width: 3px; height: 11px; border: 1px solid #777; border-width: 0 1px; }

.tree { list-style: none; margin: 5px 0 0; padding: 0; font: 11px/20px "Liberation Sans", Arial, sans-serif; }
.tree li { height: 20px; margin-bottom: 4px; display: flex; align-items: center; }
.tree .lv0 { padding-left: 17px; }
.tree .lv1 { padding-left: 35px; }
.tree .lv2 { padding-left: 72px; }
.twisty { width: 12px; height: 12px; margin-right: 7px; }
.node { height: 20px; background: #f1f1f1; display: flex; align-items: center; padding-left: 3px; }
.node svg { width: 16px; height: 16px; }
.gray { color: #8f8f8f; }
.second { margin-left: 9px; }
.label { padding: 0 9px 0 14px; }
.root { height: 16px; margin-left: 6px; padding: 0 11px 0 3px; background: #999; color: #fff; font-weight: bold; display: flex; align-items: center; gap: 14px; }
.node .badge { margin-left: 2px; }
.node input { appearance: none; width: 13px; height: 13px; margin: 0 8px 0 7px; border: 1px solid #222; border-radius: 50%; background: radial-gradient(circle, #222 0 2px, #f1f1f1 3px); }
.selected { height: 20px; margin-left: 6px; padding: 0 10px 0 4px; background: #0696d7; color: #fff; font-weight: bold; display: flex; align-items: center; gap: 14px; }
.hatched { position: relative; }
.hatched::after { content: ""; position: absolute; left: 2px; right: 4px; bottom: 1px; height: 4px; background: repeating-linear-gradient(120deg, #7d8fb5 0 2px, transparent 2px 5px); }
.node.hatched::after { left: 25px; }

/* right side */
.right-side { display: flex; flex-direction: column; align-items: flex-end; padding-top: 14px; }
.cube { margin: 0 16px 2px 0; }
.face { font: bold 8px Lato, sans-serif; fill: #555b63; }
.axis { font: bold 12px Roboto, sans-serif; }
.axis.z { fill: #2222a5; }
.axis.x { fill: #a02222; }
.dialog { width: 250px; background: #f1f1f1; border: 1px solid #ccc; }
.dialog-head { height: 24px; padding: 0 4px 0 1px; border-bottom: 1px solid #ccc; display: flex; align-items: center; }
.dialog-head .grip { margin-right: 7px; }
.dialog-head h2 { flex: 1; margin-left: 3px; }
.fields { padding-right: 32px; font: 11px/16px "Liberation Sans", Arial, sans-serif; }
.row { height: 30px; padding-left: 12px; display: flex; align-items: center; }
.row > :first-child { width: 72px; }
.row input, .drop { width: 132px; height: 26px; border: 1px solid #ccc; background: #fff; }
.row input { padding: 0 3px; font: inherit; color: #333; }
.drop { position: relative; border: 1px solid #dedede; }
.drop svg { position: absolute; left: 3px; top: 4px; width: 16px; height: 16px; pointer-events: none; }
.drop select { appearance: none; width: 100%; height: 100%; padding: 0 16px 0 23px; border: 0; background: none; font: inherit; color: #333; }
.drop::after { content: ""; position: absolute; right: 5px; top: 10px; border: 3px solid transparent; border-top: 4px solid #333; border-bottom: 0; }
.types { display: flex; gap: 5px; }
.types button { width: 24px; height: 28px; }
.types svg { width: 16px; height: 16px; }
.types .on { background: #0696d7; }
.white { color: #fff; }
.picked { width: 78px; height: 28px; gap: 4px; background: #0696d7; color: #fff; }
.clear { margin-left: 11px; }
.fields hr { margin: 4px -17px 3px 1px; border: 0; height: 3px; background: #c0c0c0; }
.dialog-foot { height: 37px; padding: 0 11px 0 8px; border-top: 1px solid #ccc; display: flex; align-items: center; gap: 10px; font: 12px/16px "Liberation Sans", Arial, sans-serif; }
.dialog-foot svg { margin-right: auto; }
.dialog-foot button { width: 60px; height: 19px; border: 1px solid #b5b5b5; background: #e9e9e9; color: #666; }

/* floating distance input over the model */
.value-box { position: absolute; left: calc(50% + 111px); top: calc(50% + 22px); width: 107px; height: 22px; background: #f1f1f1; display: flex; align-items: center; }
.dots { width: 8px; height: 18px; margin: 0 3px; border-right: 1px solid #ccc; background: radial-gradient(#ccc 1px, transparent 1px) 0 0 / 3px 3px; }
.value { position: relative; width: 69px; height: 20px; }
.value input { width: 100%; height: 100%; border: 1px solid #ccc; background: #fff; padding: 0 2px 0 0; text-align: center; font: 11px/16px "Liberation Sans", Arial, sans-serif; color: #333; }
.cursor { position: absolute; left: 37px; top: 3px; width: 1px; height: 14px; background: #000; }
.value-box button { flex: 1; }

.overlay-bottom { position: relative; display: grid; grid-template-columns: 1fr auto 1fr; align-items: center; }
.navbar { height: 24px; padding: 0 4px 0 3px; background: #f1f1f1; display: flex; align-items: center; gap: 8px; }
.navbar button { gap: 4px; }
.navbar .tight { gap: 3px; }
.navbar svg { width: 16px; height: 16px; }
.status { margin: 0 10px 0 0; text-align: right; color: #fff; font: 600 11px/16px "Open Sans", sans-serif; }

/* timeline */
.timeline { flex: none; height: 50px; background: #f1f1f1; border-top: 2px solid #ccc; border-bottom: 2px solid #444; display: flex; align-items: center; padding: 2px 13px 0 11px; }
.player { display: flex; align-items: center; gap: 13px; fill: #444; }
.features { position: relative; margin-left: 19px; display: flex; gap: 3px; }
.features button { width: 24px; height: 24px; }
.features button svg { width: 16px; height: 16px; }
.features .on { background: #0696d7; }
.features .off { opacity: .3; width: 18px; }
.marker { position: absolute; left: 12px; top: -2px; }
.settings { margin-left: auto; color: #777; }
```
